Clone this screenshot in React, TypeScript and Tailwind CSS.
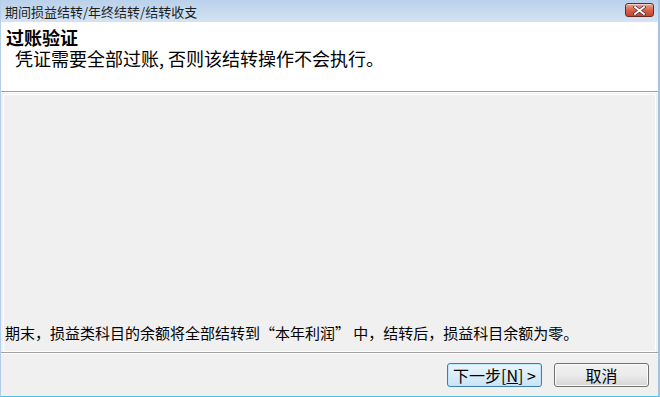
import React from "react";

const font = { fontFamily: '"Noto Sans CJK SC", "Noto Sans", sans-serif' };

function CloseButton() {
  return (
    <div className="absolute right-[4px] top-[3px] flex h-[14px] w-[29px] items-center justify-center rounded-[3px] border border-[#6b2a22] bg-gradient-to-b from-[#eaa894] via-[#d5644b] to-[#c9442b] shadow-[inset_0_1px_0_rgba(255,255,255,0.5)]">
      <svg width="13" height="9" viewBox="0 0 13 9">
        <path
          d="M2 1 L11 8 M11 1 L2 8"
          stroke="#4a2a2a"
          strokeWidth="3.2"
          strokeLinecap="square"
        />
        <path
          d="M2 1 L11 8 M11 1 L2 8"
          stroke="#ffffff"
          strokeWidth="1.8"
          strokeLinecap="square"
        />
      </svg>
    </div>
  );
}

function WinButton({ children, primary }: { children: React.ReactNode; primary?: boolean }) {
  return (
    <button
      className={`flex h-[24px] w-[95px] items-center justify-center rounded-[3px] border text-[16px] leading-none text-black ${
        primary
          ? "border-[#3c7fb1] bg-gradient-to-b from-[#eaf6fd] to-[#c9e4f6] shadow-[inset_0_0_0_1px_#bfe6fb]"
          : "border-[#707070] bg-gradient-to-b from-[#f2f2f2] via-[#ebebeb] to-[#d5d5d5] shadow-[inset_0_0_0_1px_#fcfcfc]"
      }`}
      style={font}
    >
      {children}
    </button>
  );
}

export default function App() {
  return (
    <div
      className="relative flex h-[397px] w-[660px] flex-col border-b border-l border-r-2 border-b-[#47c2ee] border-l-[#b3cdea] border-r-[#a2c4e8] bg-[#f0f0f0]"
      style={font}
    >
      {/* Title bar */}
      <div className="relative flex h-[22px] shrink-0 items-center bg-gradient-to-b from-[#b9d1ea] to-[#d4e3f3] pl-[4px] text-[13px] text-[#1e1e1e]">
        <span className="leading-none">期间损益结转/年终结转/结转收支</span>
        <CloseButton />
      </div>

      {/* Header */}
      <div className="flex h-[69px] shrink-0 flex-col bg-white pl-[5px] pt-[5px]">
        <div className="text-[18px] font-bold leading-[20px] text-black">过账验证</div>
        <div className="mt-[1px] pl-[9px] text-[18px] leading-[20px] text-black">
          凭证需要全部过账, 否则该结转操作不会执行。
        </div>
      </div>
      <div className="h-px shrink-0 bg-[#a0a0a0]" />
      <div className="h-px shrink-0 bg-white" />

      {/* Body */}
      <div className="flex flex-1 flex-col px-[2px] pt-[1px]">
        <div className="flex flex-1 flex-col justify-end border border-white pb-[9px] pl-[1px]">
          <div className="text-[15px] leading-[18px] text-black">
            期末，损益类科目的余额将全部结转到“本年利润” 中，结转后，损益科目余额为零。
          </div>
        </div>
      </div>
      <div className="h-px shrink-0 bg-[#a0a0a0]" />
      <div className="h-px shrink-0 bg-white" />

      {/* Buttons */}
      <div className="flex h-[42px] shrink-0 items-start justify-end gap-[12px] pr-[9px] pt-[9px]">
        <WinButton primary>
          下一步[<span className="underline">N</span>] &gt;
        </WinButton>
        <WinButton>取消</WinButton>
      </div>
    </div>
  );
}
